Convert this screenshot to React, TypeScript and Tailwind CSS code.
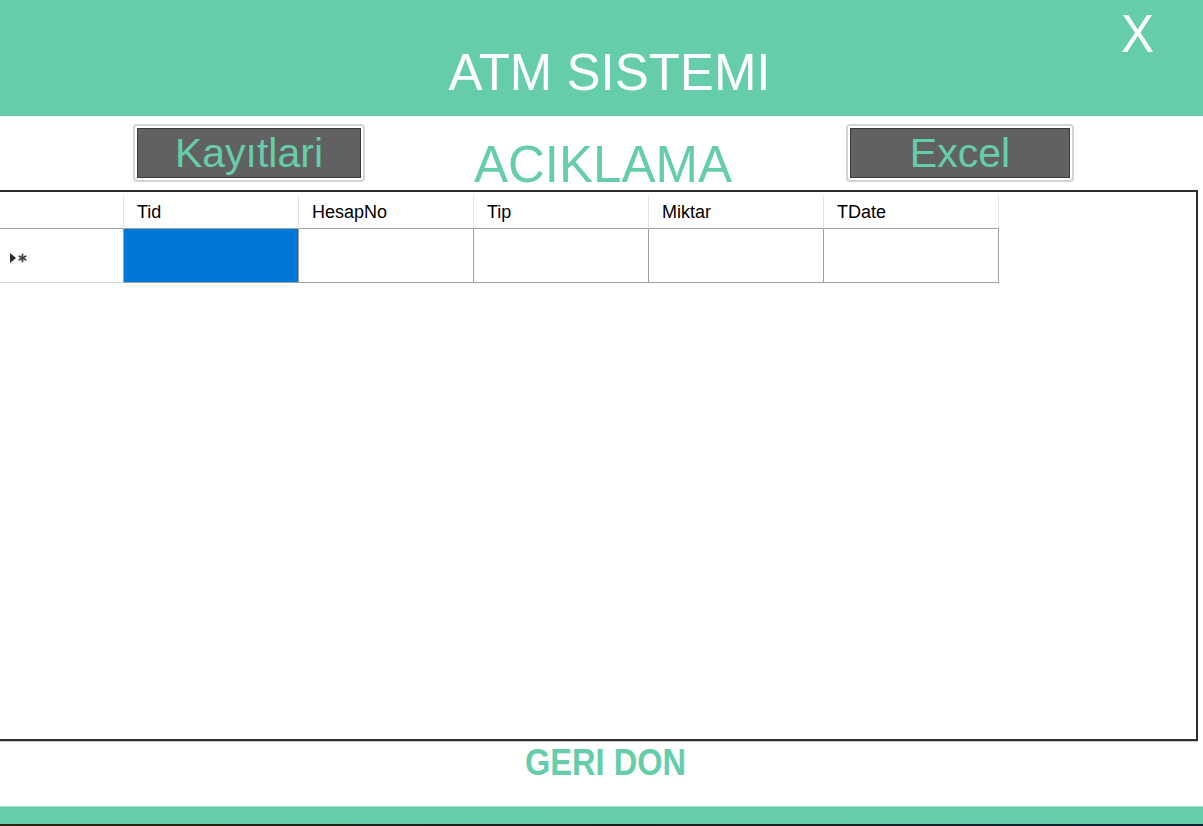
import React from 'react';

const columns = ['Tid', 'HesapNo', 'Tip', 'Miktar', 'TDate'];

function FormButton({ label, wide }: { label: string; wide: string }) {
  return (
    <div className={`${wide} h-[58px] rounded-[4px] border-2 border-[#d4d4d4] bg-white p-[2px]`}>
      <div className="flex h-full w-full items-center justify-center border border-[#3a3a3a] bg-[#616161]">
        <span className="text-[41px] leading-none text-[#66cdaa]">{label}</span>
      </div>
    </div>
  );
}

function RowMarker() {
  return (
    <svg width="20" height="10" viewBox="0 0 20 10" className="ml-[10px]">
      <path d="M0 0 L6 5 L0 10 Z" fill="#2a2a2a" />
      <g stroke="#444" strokeWidth="1.8" strokeLinecap="round">
        <line x1="12.5" y1="1.5" x2="12.5" y2="8.5" />
        <line x1="9.3" y1="3.2" x2="15.7" y2="6.8" />
        <line x1="9.3" y1="6.8" x2="15.7" y2="3.2" />
      </g>
    </svg>
  );
}

export default function App() {
  return (
    <div className="relative flex h-[826px] w-[1203px] flex-col overflow-hidden bg-white font-['Liberation_Sans',Arial,sans-serif]">
      {/* header */}
      <header className="relative h-[116px] shrink-0 bg-[#66cdaa]">
        <h1 className="pl-[16px] pt-[47px] text-center text-[51px] leading-none text-white">ATM SISTEMI</h1>
        <button className="absolute right-[46px] top-[6px] origin-left scale-x-[0.92] text-[54px] leading-none text-white">
          X
        </button>
      </header>

      {/* toolbar */}
      <div className="flex h-[74px] shrink-0 items-start">
        <div className="ml-[133px] mt-[8px]">
          <FormButton label="Kayıtlari" wide="w-[232px]" />
        </div>
        <div className="ml-[109px] mt-[23px] text-[51px] leading-none text-[#66cdaa]">ACIKLAMA</div>
        <div className="ml-[114px] mt-[8px]">
          <FormButton label="Excel" wide="w-[228px]" />
        </div>
      </div>

      {/* data grid */}
      <div className="h-[551px] w-[1198px] shrink-0 border-y-2 border-r-2 border-[#2e2e2e] bg-white pt-[3px] shadow-[0_1px_0_#c8c8c8]">
        <div className="grid w-[999px] grid-cols-[124px_175px_175px_175px_175px_175px] text-[18px] text-black">
          <div className="h-[34px] border-b border-r border-b-[#a0a0a0] border-r-[#e4e4e4]" />
          {columns.map((c) => (
            <div
              key={c}
              className="flex h-[34px] items-center border-b border-r border-b-[#a0a0a0] border-r-[#e4e4e4] pl-[13px] pt-[2px]"
            >
              {c}
            </div>
          ))}
          <div className="flex h-[54px] items-center border-b border-r border-b-[#d6d6d6] border-r-[#a0a0a0] pt-[4px]">
            <RowMarker />
          </div>
          <div className="h-[54px] border-b border-r border-[#a0a0a0] bg-[#0078d7]" />
          {columns.slice(1).map((c) => (
            <div key={c} className="h-[54px] border-b border-r border-[#a0a0a0] bg-white" />
          ))}
        </div>
      </div>

      {/* footer */}
      <div className="flex h-[65px] shrink-0 items-start justify-center pl-[7px] pt-[3px]">
        <button className="scale-x-[0.88] text-[37px] font-bold leading-none text-[#66cdaa]">GERI DON</button>
      </div>
      <div className="h-[18px] shrink-0 border-t border-[#a8e3cd] bg-[#66cdaa]" />
      <div className="h-[2px] shrink-0 bg-gradient-to-r from-[#2a2410] via-[#1b1f1a] to-[#0e2230]" />
    </div>
  );
}
